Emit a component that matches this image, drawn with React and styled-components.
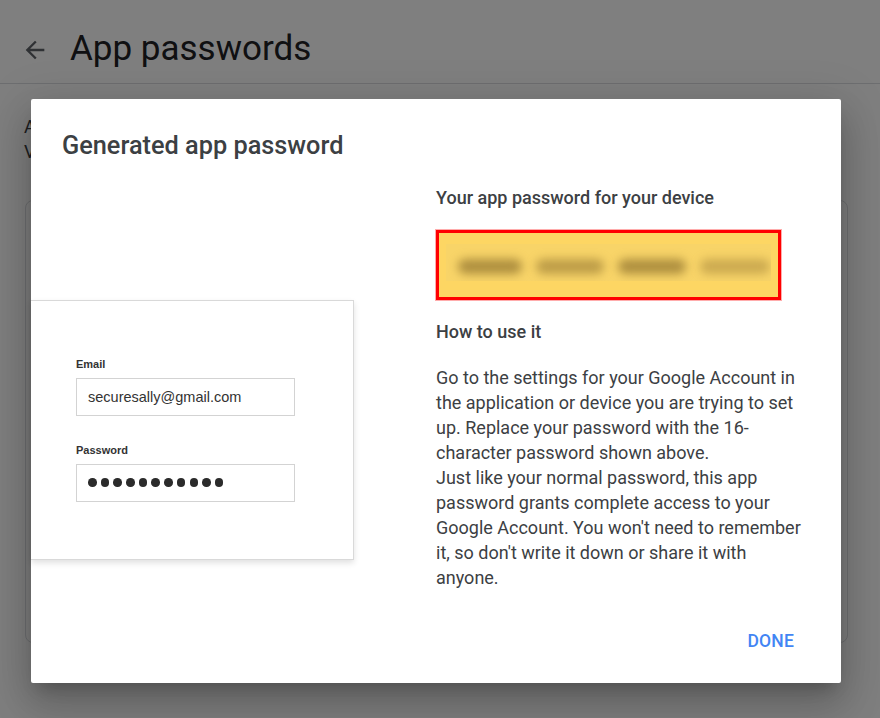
import React from "react";
import styled, { createGlobalStyle } from "styled-components";

const Global = createGlobalStyle`
  html, body { margin: 0; padding: 0; background: #fff; }
  body { font-family: Roboto, "Noto Sans", sans-serif; width: 880px; height: 718px; overflow: hidden; }
  * { box-sizing: border-box; }
`;

const Page = styled.div`
  position: relative;
  width: 880px;
  height: 718px;
  overflow: hidden;
  background: #fff;
`;

const Header = styled.header`
  display: flex;
  align-items: center;
  gap: 20px;
  height: 84px;
  padding: 17px 0 0 20px;
  border-bottom: 1px solid #dadce0;
`;

const BackButton = styled.span`
  display: flex;
  width: 30px;
  height: 30px;
  align-items: center;
  justify-content: center;
  color: #5f6368;
`;

const PageTitle = styled.h1`
  margin: 0 0 4px;
  font-family: Roboto, sans-serif;
  font-weight: 400;
  font-size: 35px;
  color: #202124;
  letter-spacing: 0;
`;

const Content = styled.main`
  padding: 30px 32px 0 24px;
`;

const Intro = styled.p`
  margin: 0;
  font-size: 18px;
  line-height: 25px;
  color: #3c4043;
`;

const BgCard = styled.div`
  margin: 36px 0 0 1px;
  height: 443px;
  border: 1px solid #dadce0;
  border-radius: 8px;
`;

const Scrim = styled.div`
  position: absolute;
  inset: 0;
  background: rgba(0, 0, 0, 0.5);
`;

const Dialog = styled.section`
  position: absolute;
  left: 31px;
  top: 99px;
  width: 810px;
  height: 584px;
  background: #fff;
  border-radius: 2px;
  box-shadow: 0 24px 38px 3px rgba(0, 0, 0, 0.14), 0 9px 46px 8px rgba(0, 0, 0, 0.12),
    0 11px 15px -7px rgba(0, 0, 0, 0.2);
  display: flex;
  flex-direction: column;
`;

const DialogTitle = styled.h2`
  margin: 0;
  padding: 31px 31px 0;
  font-size: 25.3px;
  line-height: 32px;
  font-weight: 500;
  color: #3c4043;
`;

const DialogBody = styled.div`
  display: grid;
  grid-template-columns: 323px 1fr;
  column-gap: 82px;
  flex: 1;
`;

const IllustrationCol = styled.div`
  padding-top: 138px;
`;

const Illustration = styled.div`
  height: 260px;
  background: #fff;
  border: 1px solid #d9d9d9;
  border-left: none;
  box-shadow: 0 3px 6px rgba(0, 0, 0, 0.12);
  padding: 57px 0 0 45px;
  font-family: "Liberation Sans", Arial, sans-serif;
`;

const FieldLabel = styled.div`
  font-size: 11px;
  line-height: 13px;
  font-weight: 700;
  color: #333;
  margin-top: ${(p) => (p.$first ? "0" : "28px")};
`;

const FieldBox = styled.div`
  margin-top: 7px;
  width: 219px;
  height: 38px;
  border: 1px solid #d3d3d3;
  display: flex;
  align-items: center;
  gap: 4.2px;
  padding: 0 0 1px 11px;
  font-size: 14.5px;
  color: #333;
`;

const Dot = styled.span`
  width: 8.5px;
  height: 8.5px;
  border-radius: 50%;
  background: #2b2b2b;
`;

const InfoCol = styled.div`
  display: flex;
  flex-direction: column;
  padding-top: 24px;
  width: 372px;
`;

const SubHeading = styled.h3`
  margin: ${(p) => p.$mt || "0"} 0 0;
  font-size: 18px;
  line-height: 24px;
  font-weight: 500;
  color: #3c4043;
`;

const PasswordBox = styled.div`
  margin-top: 20px;
  width: 345px;
  height: 70px;
  background: #fdd663;
  border: 3px solid #ff0000;
  box-shadow: 0 0 0 1px rgba(255, 90, 90, 0.5);
  padding: 11px 7px;
`;

const BlurStrip = styled.div`
  height: 37px;
  background: #f8d468;
  overflow: hidden;
  display: flex;
  align-items: center;
  gap: 14px;
  padding: 8px 0 0 12px;
`;

const BlurWord = styled.span`
  flex: none;
  width: ${(p) => p.$w}px;
  height: 15px;
  border-radius: 8px;
  background: rgba(150, 120, 50, ${(p) => p.$o});
  filter: blur(5px);
`;

const Paragraph = styled.p`
  margin: 21px 0 0;
  font-size: 18px;
  line-height: 25px;
  color: #3c4043;
`;

const Footer = styled.div`
  display: flex;
  justify-content: flex-end;
  padding: 0 39px 24px;
`;

const DoneButton = styled.button`
  border: none;
  background: none;
  padding: 8px 8px;
  font-family: Roboto, sans-serif;
  font-size: 17.5px;
  font-weight: 500;
  color: #4285f4;
  letter-spacing: 0.2px;
  cursor: pointer;
`;

export default function App() {
  return (
    <Page>
      <Global />
      <Header>
        <BackButton>
          <svg width="28" height="28" viewBox="0 0 24 24" fill="none">
            <path d="M20 11H7.83l5.59-5.59L12 4l-8 8 8 8 1.41-1.41L7.83 13H20v-2z" fill="#5f6368" />
          </svg>
        </BackButton>
        <PageTitle>App passwords</PageTitle>
      </Header>
      <Content>
        <Intro>
          App passwords let you sign in
          <br />
          Verification.
        </Intro>
        <BgCard />
      </Content>
      <Scrim />
      <Dialog>
        <DialogTitle>Generated app password</DialogTitle>
        <DialogBody>
          <IllustrationCol>
            <Illustration>
              <FieldLabel $first>Email</FieldLabel>
              <FieldBox>securesally@gmail.com</FieldBox>
              <FieldLabel>Password</FieldLabel>
              <FieldBox>
                {Array.from({ length: 11 }).map((_, i) => (
                  <Dot key={i} />
                ))}
              </FieldBox>
            </Illustration>
          </IllustrationCol>
          <InfoCol>
            <SubHeading>Your app password for your device</SubHeading>
            <PasswordBox>
              <BlurStrip>
                <BlurWord $w={64} $o={0.75} />
                <BlurWord $w={68} $o={0.6} />
                <BlurWord $w={68} $o={0.75} />
                <BlurWord $w={70} $o={0.45} />
              </BlurStrip>
            </PasswordBox>
            <SubHeading $mt="20px">How to use it</SubHeading>
            <Paragraph>
              Go to the settings for your Google Account in the application or device you are trying to set
              up. Replace your password with the 16-character password shown above.
              <br />
              Just like your normal password, this app password grants complete access to your Google Account.
              You won't need to remember it, so don't write it down or share it with anyone.
            </Paragraph>
          </InfoCol>
        </DialogBody>
        <Footer>
          <DoneButton>DONE</DoneButton>
        </Footer>
      </Dialog>
    </Page>
  );
}
